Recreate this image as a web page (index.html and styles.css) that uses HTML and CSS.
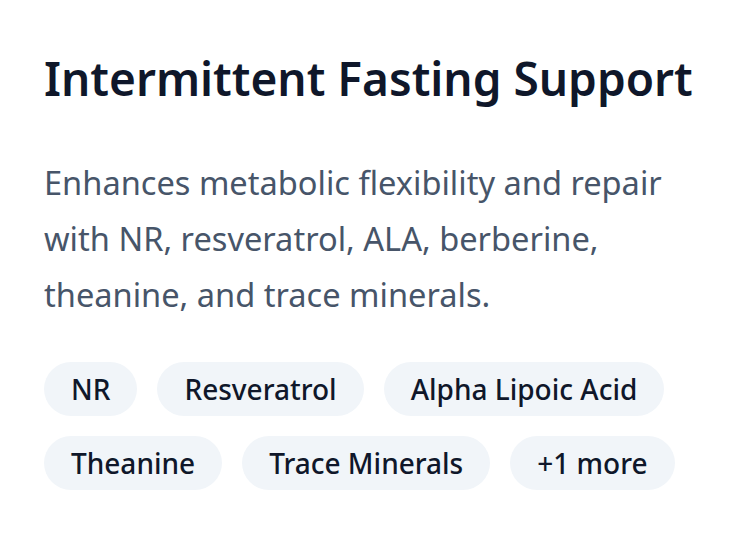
FILE: index.html
```html
<!DOCTYPE html>
<html lang="en">
<head>
<meta charset="utf-8">
<link rel="stylesheet" href="styles.css">
</head>
<body>
<div class="card">
  <h2 class="title">Intermittent Fasting Support</h2>
  <p class="desc">Enhances metabolic flexibility and repair with NR, resveratrol, ALA, berberine, theanine, and trace minerals.</p>
  <div class="tags">
    <span class="tag">NR</span>
    <span class="tag">Resveratrol</span>
    <span class="tag">Alpha Lipoic Acid</span>
    <span class="tag">Theanine</span>
    <span class="tag">Trace Minerals</span>
    <span class="tag">+1 more</span>
  </div>
</div>
</body>
</html>
```
FILE: styles.css
```css
html, body {
  margin: 0;
  padding: 0;
  background: #ffffff;
}
body {
  font-family: "Noto Sans", "Open Sans", sans-serif;
}
.card {
  padding: 42px 44px;
  width: 649px;
}
.title {
  margin: 0;
  font-size: 46px;
  font-weight: 600;
  line-height: 72px;
  color: #0f172a;
}
.desc {
  margin: 41px 0 0;
  font-size: 32.6px;
  line-height: 56px;
  color: #475569;
}
.tags {
  margin-top: 39px;
  display: flex;
  flex-wrap: wrap;
  gap: 20px;
}
.tag {
  background: #f1f5f9;
  color: #0f172a;
  font-size: 28px;
  font-weight: 500;
  height: 54px;
  line-height: 54px;
  padding: 0 27px;
  border-radius: 27px;
}
```
